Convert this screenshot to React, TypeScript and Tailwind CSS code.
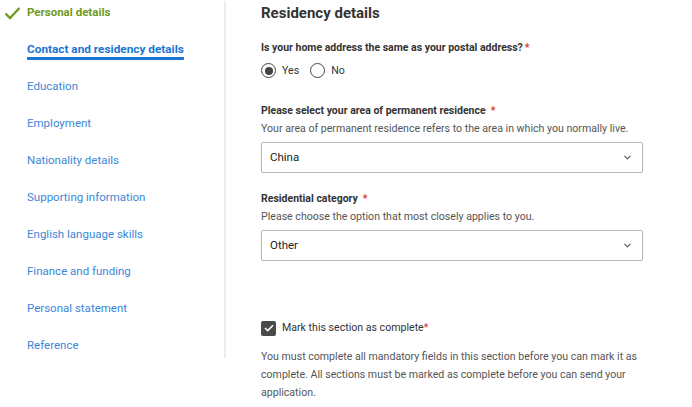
import { ChevronDown } from "lucide-react";

const navItems: string[] = [
  "Education",
  "Employment",
  "Nationality details",
  "Supporting information",
  "English language skills",
  "Finance and funding",
  "Personal statement",
  "Reference",
];

function Req() {
  return <span className="text-[#e0302a] ml-[5px]">*</span>;
}

export default function App(): JSX.Element {
  return (
    <div
      className="w-[692px] h-[407px] bg-white overflow-hidden flex"
      style={{ fontFamily: "Roboto, 'Liberation Sans', sans-serif" }}
    >
      {/* sidebar */}
      <div className="w-[224px] shrink-0 pt-[3px]">
        <div className="h-[19px] flex items-center">
          <svg width="17" height="14" viewBox="0 0 17 14" className="ml-[4px] mr-[6px]">
            <path d="M1.5 7.5 L6 12 L15.5 2" fill="none" stroke="#6f9a25" strokeWidth="2.4" />
          </svg>
          <span className="text-[11.5px] font-bold text-[#6f9a25]">Personal details</span>
        </div>
        <div className="mt-[19px] ml-[27px] h-[20px] flex items-start">
          <span className="inline-block text-[11.8px] font-bold text-[#1b74d2] leading-[16px] border-b-[3px] border-[#1b74d2] rounded-b-[1px]">
            Contact and residency details
          </span>
        </div>
        <div className="flex flex-col gap-[18px] mt-[16px] ml-[27px]">
          {navItems.map((item) => (
            <div key={item} className="h-[19px] text-[11.5px] leading-[19px] text-[#3b87d8]">
              {item}
            </div>
          ))}
        </div>
      </div>

      {/* divider */}
      <div className="w-[2px] h-[357px] mt-[1px] bg-[#ececec] shrink-0" />

      {/* main */}
      <div className="ml-[35px] w-[382px] text-[#333]">
        <h1 className="text-[15px] font-bold leading-[22px] mt-[2px] text-[#333]">Residency details</h1>

        <div className="mt-[16px] text-[10.5px] font-bold leading-[16px]">
          Is your home address the same as your postal address?<span className="text-[#e0302a] ml-[2px]">*</span>
        </div>
        <div className="flex items-center mt-[6px] h-[17px] text-[10.6px] text-[#333]">
          <span className="w-[15px] h-[15px] rounded-full border-[1.5px] border-[#444] flex items-center justify-center">
            <span className="w-[8px] h-[8px] rounded-full bg-[#444]" />
          </span>
          <span className="ml-[6px]">Yes</span>
          <span className="ml-[11px] w-[15px] h-[15px] rounded-full border-[1.5px] border-[#444]" />
          <span className="ml-[6px]">No</span>
        </div>

        <div className="mt-[24px] text-[10.5px] font-bold leading-[16px]">
          Please select your area of permanent residence<Req />
        </div>
        <div className="mt-[2px] text-[10.6px] leading-[16px] text-[#555]">
          Your area of permanent residence refers to the area in which you normally live.
        </div>
        <div className="mt-[5px] h-[31px] border border-[#b5b5b5] rounded-[2px] flex items-center justify-between px-[8px]">
          <span className="text-[11.5px] text-[#222]">China</span>
          <ChevronDown size={11} strokeWidth={2.5} className="text-[#555] mr-[1px]" />
        </div>

        <div className="mt-[18px] text-[10.5px] font-bold leading-[16px]">
          Residential category<Req />
        </div>
        <div className="mt-[2px] text-[10.6px] leading-[16px] text-[#555]">
          Please choose the option that most closely applies to you.
        </div>
        <div className="mt-[5px] h-[31px] border border-[#b5b5b5] rounded-[2px] flex items-center justify-between px-[8px]">
          <span className="text-[11.5px] text-[#222]">Other</span>
          <ChevronDown size={11} strokeWidth={2.5} className="text-[#555] mr-[1px]" />
        </div>

        <div className="mt-[59px] flex items-center h-[16px]">
          <span className="w-[15px] h-[15px] rounded-[2px] bg-[#4a4a4a] flex items-center justify-center">
            <svg width="10" height="8" viewBox="0 0 10 8">
              <path d="M1 4 L3.8 6.6 L9 1.2" fill="none" stroke="#fff" strokeWidth="1.6" />
            </svg>
          </span>
          <span className="ml-[6px] text-[10.6px] text-[#333]">
            Mark this section as complete<span className="text-[#e0302a]">*</span>
          </span>
        </div>
        <p className="mt-[12px] text-[10.6px] leading-[18px] text-[#555]">
          You must complete all mandatory fields in this section before you can mark it as complete. All sections
          must be marked as complete before you can send your application.
        </p>
      </div>
    </div>
  );
}
